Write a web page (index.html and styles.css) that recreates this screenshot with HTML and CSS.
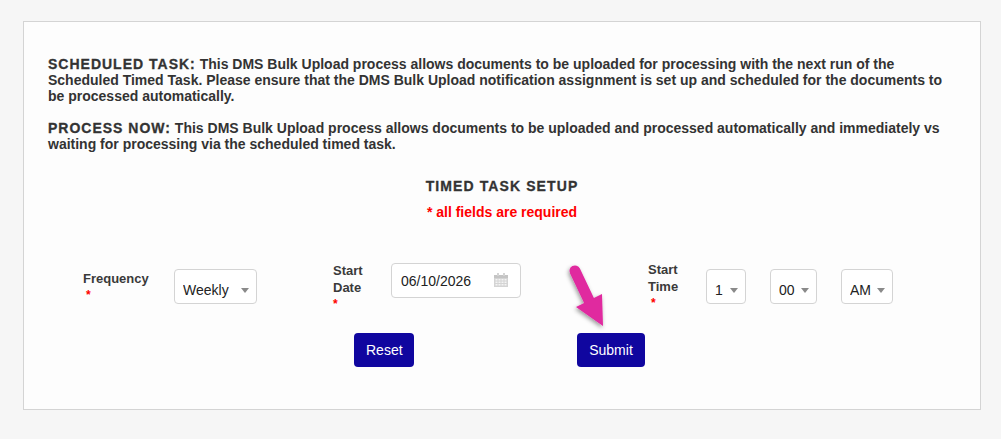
FILE: index.html
```html
<!DOCTYPE html>
<html lang="en">
<head>
    <meta charset="UTF-8">
    <title>DMS Bulk Upload</title>
    <link rel="stylesheet" href="styles.css">
</head>
<body>

<div class="panel">
    <p class="info"><span class="info-title">SCHEDULED TASK:</span> This DMS Bulk Upload process allows documents to be uploaded for processing with the next run of the Scheduled Timed Task. Please ensure that the DMS Bulk Upload notification assignment is set up and scheduled for the documents to be processed automatically.</p>
    <p class="info"><span class="info-title">PROCESS NOW:</span> This DMS Bulk Upload process allows documents to be uploaded and processed automatically and immediately vs waiting for processing via the scheduled timed task.</p>

    <h3 class="setup-title">TIMED TASK SETUP</h3>
    <p class="required-note">* all fields are required</p>

    <form class="setup-form">
        <div class="form-row">
            <div class="field field-frequency">
                <label class="field-label label-frequency">Frequency <span class="star">*</span></label>
                <div class="select-wrap select-weekly">
                    <select><option>Weekly</option></select>
                </div>
            </div>
            <div class="field field-date">
                <label class="field-label label-date">Start Date <span class="star">*</span></label>
                <div class="date-wrap">
                    <input type="text" value="06/10/2026">
                    <svg class="calendar" width="14" height="14" viewBox="0 0 14 14">
                        <path fill="#d4d4d4" d="M0 2h14v12H0z"/>
                        <path fill="#c4c4c4" d="M0 2h14v3H0z"/>
                        <path fill="#d4d4d4" d="M3 0h2v3H3zM9 0h2v3H9z"/>
                        <path fill="#f4f4f4" d="M1.500 6h2v1.500h-2zM4.500 6h2v1.500h-2zM7.500 6h2v1.500h-2zM10.500 6h2v1.500h-2zM1.500 8.500h2V10h-2zM4.500 8.500h2V10h-2zM7.500 8.500h2V10h-2zM10.500 8.500h2V10h-2zM1.500 11h2v1.500h-2zM4.500 11h2v1.500h-2zM7.500 11h2v1.500h-2zM10.500 11h2v1.500h-2z"/>
                    </svg>
                </div>
            </div>
            <div class="field field-time">
                <label class="field-label label-time">Start Time <span class="star">*</span></label>
                <div class="select-wrap select-hour">
                    <select><option>1</option></select>
                </div>
                <div class="select-wrap select-minute">
                    <select><option>00</option></select>
                </div>
                <div class="select-wrap select-ampm">
                    <select><option>AM</option></select>
                </div>
            </div>
        </div>
        <div class="button-row">
            <button type="button" class="button button-reset">Reset</button>
            <button type="button" class="button button-submit">Submit</button>
        </div>
    </form>

    <!-- callout arrow pointing at submit -->
    <svg class="callout-arrow" width="70" height="80" viewBox="0 0 70 80">
        <defs>
            <filter id="arrow-shadow" x="-30%" y="-30%" width="170%" height="170%">
                <feDropShadow dx="-1" dy="2" stdDeviation="2" flood-color="#000" flood-opacity="0.4"/>
            </filter>
        </defs>
        <path filter="url(#arrow-shadow)" fill="#e0299f" d="M11.100 16.600A5.500 5.500 0 0 1 20.900 11.400L34.900 40.900 43 37 44 69 17 50 25.100 46.100z"/>
    </svg>
</div>

</body>
</html>
```

FILE: styles.css
```css
* {
    box-sizing: border-box;
}
body {
    margin: 0;
    padding: 21px 20px 29px 23px;
    background-color: #f6f6f6;
    font-family: "Liberation Sans", Arial, sans-serif;
    font-size: 14px;
    color: #333;
}
.panel {
    position: relative;
    height: 389px;
    padding: 34px 24px 0;
    border: 1px solid #d4d4d4;
    background-color: #fdfdfd;
}
.info {
    margin: 0 0 16px;
    font-weight: bold;
    line-height: 16px;
}
.info-title {
    letter-spacing: 1px;
    -webkit-text-stroke: 0.3px #333;
}
.setup-title {
    margin: 26px 0 0;
    font-size: 14px;
    line-height: 16px;
    letter-spacing: 1.1px;
    text-align: center;
    -webkit-text-stroke: 0.3px #333;
}
.required-note {
    margin: 10px 0 0;
    color: #f00;
    font-weight: bold;
    line-height: 16px;
    text-align: center;
}
.setup-form {
    margin-top: 43px;
}
.form-row {
    display: flex;
    align-items: flex-start;
    margin-left: 35px;
}
.field {
    display: flex;
    align-items: flex-start;
}
.field-label {
    display: block;
    font-weight: bold;
    font-size: 13px;
    line-height: 17px;
    color: #3a3a3a;
}
.star {
    display: block;
    margin-left: 3px;
    color: #f00;
    font-size: 12px;
    line-height: 16px;
}
.field-frequency {
    width: 250px;
    padding-top: 6px;
}
.label-frequency {
    width: 91px;
    padding-top: 1px;
}
.field-date {
    width: 315px;
}
.label-date {
    width: 58px;
    margin-top: -1px;
}
.label-date .star {
    margin-left: 0;
}
.field-time {
    padding-top: 6px;
}
.label-time {
    width: 58px;
    margin-top: -8px;
}
.select-wrap {
    position: relative;
    height: 35px;
}
.select-wrap::after {
    content: "";
    position: absolute;
    right: 8px;
    top: 19px;
    border-top: 5px solid #8a8a8a;
    border-left: 4px solid transparent;
    border-right: 4px solid transparent;
}
.select-wrap select {
    width: 100%;
    height: 100%;
    padding: 7px 0 0 8px;
    border: 1px solid #d4d4d4;
    border-radius: 4px;
    background-color: #fff;
    appearance: none;
    font-family: "Liberation Sans", Arial, sans-serif;
    font-size: 14px;
    color: #222;
}
.select-weekly {
    width: 83px;
}
.select-hour {
    width: 40px;
}
.select-minute {
    width: 47px;
    margin-left: 24px;
}
.select-ampm {
    width: 52px;
    margin-left: 24px;
}
.date-wrap {
    position: relative;
    width: 130px;
    height: 35px;
}
.date-wrap input {
    width: 100%;
    height: 100%;
    padding: 0 10px 0 9px;
    border: 1px solid #d4d4d4;
    border-radius: 4px;
    background-color: #fff;
    font-family: "Liberation Sans", Arial, sans-serif;
    font-size: 14px;
    color: #222;
}
.calendar {
    position: absolute;
    right: 13px;
    top: 10px;
}
.button-row {
    display: flex;
    margin-top: 21px;
    margin-left: 306px;
}
.button {
    height: 34px;
    padding: 0 12px;
    border: none;
    border-radius: 4px;
    background-color: #10069f;
    color: #fff;
    font-family: "Liberation Sans", Arial, sans-serif;
    font-size: 14px;
}
.button-reset {
    width: 60px;
}
.button-submit {
    width: 68px;
    margin-left: 163px;
}
.callout-arrow {
    position: absolute;
    left: 535px;
    top: 235px;
}
```
